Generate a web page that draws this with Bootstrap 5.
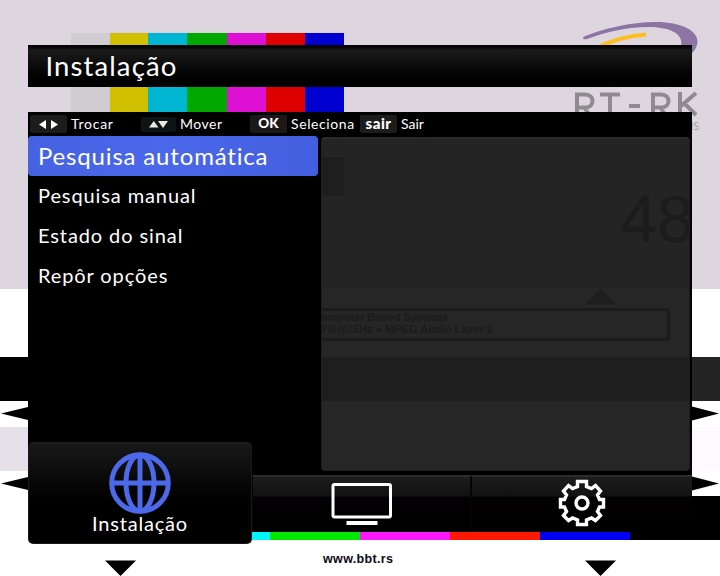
<!DOCTYPE html>
<html lang="pt">
<head>
<meta charset="utf-8">
<meta name="viewport" content="width=device-width, initial-scale=1">
<title>Instalação</title>
<link href="https://cdn.jsdelivr.net/npm/bootstrap@5.3.0/dist/css/bootstrap.min.css" rel="stylesheet">
<style>
body{margin:0;background:#fff;font-family:Lato,"Open Sans",sans-serif;overflow:hidden}
.tv-screen{width:720px;height:576px}
.test-card{inset:0;width:720px;height:576px}
.osd{width:664px;margin-left:28px;padding-top:45px;color:#fff}
.osd-title{height:42px;margin-bottom:25px;padding-left:17.5px;font-size:27.5px;line-height:42px;letter-spacing:1.1px;background:linear-gradient(#050505 0,#050505 2px,#191919 5px,#111 16px,#050505 27px,#000 36px)}
.osd-main{height:363px;background:#000}
.keys{height:24px;font-size:14px;line-height:24px}
.keycap{width:37px;height:18px;background:#1c1c1c;border-radius:2px;font-weight:900;font-size:14px;line-height:17px}
.key-item{gap:4px}
.menu-col{width:290px}
.menu-col .list-group-item{height:40px;padding:0 0 0 10px;border:0;border-radius:0;background:transparent;color:#fff;font-size:20px;line-height:39px;letter-spacing:.9px;white-space:nowrap}
.menu-col .list-group-item.active{background:linear-gradient(90deg,#4562e3,#4c68ea 45%,#435fe0);border-radius:4px;font-size:24px;line-height:40px;letter-spacing:.83px;margin:0}
.preview{width:369px;height:334px;margin:1px 0 0 3px;background:#242424;border:1px solid #1e1e1e;border-top:2px solid #2b2b2b;border-radius:4px;overflow:hidden}
.preview svg{display:block;margin:-2px 0 0 -1px}
.tabs{height:102px;margin-top:-33px}
.tab-now{width:224px;height:102px;background:linear-gradient(#171717 0,#111 18px,#060606 42px,#000 60px);border:1px solid #191919;border-top:2px solid #1d1d1d;border-radius:5px;padding-top:8px;font-size:20px;line-height:19px;letter-spacing:.8px}
.tab-off{height:57px;margin-top:33px;border-top:2px solid #2c2c2c;border-left:1px solid #050505;background:linear-gradient(#1c1c1c,#121212 19px,#030103 20px,#000)}
.tab-tv{width:219px;border-right:1px solid #050505}
.tab-gear{width:221px;background:linear-gradient(#1c1c1c,#121212 19px,#030002 20px,#000)}
</style>
<script src="https://cdn.jsdelivr.net/npm/bootstrap@5.3.0/dist/js/bootstrap.bundle.min.js"></script>
</head>
<body>
<div class="tv-screen position-relative overflow-hidden">
  <!-- Broadcast test card behind the menu -->
  <svg class="test-card position-absolute" viewBox="0 0 720 576" aria-hidden="true">
    <path fill="#ddd6de" d="M0 0h720v289H0z"/>
    <path fill="#d1ccd1" d="M71 33h39v80H71z"/><path fill="#d0c000" d="M110 33h38v80h-38z"/><path fill="#00b6d3" d="M148 33h39v80h-39z"/><path fill="#00a800" d="M187 33h40v80h-40z"/><path fill="#de10d3" d="M227 33h39v80h-39z"/><path fill="#de0000" d="M266 33h39v80h-39z"/><path fill="#0000d0" d="M305 33h39v80h-39z"/>
    <path fill="#d8c8ec" opacity=".45" d="M110 32h234v1H110z"/>
    <path fill="#8e74a5" d="M584 36.500C603 29 630 22 656 22C682 22 698 31 697.500 42C697 47 695 50 692 53L681 46C684 33 668 27 649 27C624 27 604 33 587 39C583 40 582 38 584 36.500Z"/>
    <path fill="none" stroke="#ffbe1c" stroke-width="4" d="M595 49C609 41 627 36 646 34.500"/>
    <g fill="none" stroke="#8f8a90" stroke-width="4"><path d="M577 116V94.500h8c10 0 10 13 0 13h-8M584 107l8 12M600 94.500h20M610 94v22M629 106H640M653 116V94.500h8c10 0 10 13 0 13h-8M660 107l8 12M680 92v24M696 93l-15 13M684 103l12 12"/></g>
    <text x="699" y="130" text-anchor="end" font-family="Open Sans, sans-serif" font-size="10" fill="#a09aa2">SYSTEMS</text>
    <path d="M0 357h28v44H0z"/><path fill="#242424" d="M692 357h28v44h-28z"/>
    <path fill="#e6e0e8" d="M0 427h28v44H0z"/><path fill="#fdf9fe" d="M692 427h28v44h-28z"/>
    <path d="M1 413.500l27-6.500v13zM1 483.500l27-6.500v13zM719 413.500l-27-7v14zM719 483.500l-27-7v14zM105 560.500h31L120.500 576zM585 560.500h31L600.500 576z"/>
    <path fill="#00f5ff" d="M252 530h18v10h-18z"/><path fill="#00e800" d="M270 530h90v10h-90z"/><path fill="#ff18ff" d="M360 530h90v10h-90z"/><path fill="#ff1800" d="M450 530h90v10h-90z"/><path fill="#0000f4" d="M540 530h90v10h-90z"/><path d="M630 496h90v44h-90z"/>
    <text x="323" y="563" textLength="70" font-family="Liberation Sans, Arial, sans-serif" font-weight="700" font-size="12.500" fill="#100a18">www.bbt.rs</text>
  </svg>

  <div class="osd position-relative">
    <header class="osd-title">Instalação</header>

    <main class="osd-main">
      <div class="keys d-flex">
        <div class="key-item d-flex align-items-center" style="width:113px;padding-left:2px">
          <span class="keycap d-flex align-items-center justify-content-center"><svg width="19" height="9" viewBox="0 0 19 9"><path fill="#fff" d="M7 0v9L0 4.500zM12 0v9l7-4.500z"/></svg></span><span style="letter-spacing:.75px">Trocar</span>
        </div>
        <div class="key-item d-flex align-items-center" style="width:109px">
          <span class="keycap d-flex align-items-center justify-content-center" style="width:35px;height:15px;background:#0d1416"><svg width="19" height="7" viewBox="0 0 19 7"><path fill="#e8e8e0" d="M0 6.500h9.500L4.800 0zM9 0h10l-5 7z"/></svg></span><span style="letter-spacing:.5px">Mover</span>
        </div>
        <div class="key-item d-flex align-items-center" style="width:110px">
          <span class="keycap text-center" style="background:#1c1719;font-size:13.5px">OK</span><span style="letter-spacing:.6px">Seleciona</span>
        </div>
        <div class="key-item d-flex align-items-center">
          <span class="keycap text-center" style="font-size:15px;line-height:16px;letter-spacing:.5px">sair</span><span>Sair</span>
        </div>
      </div>
      <div class="d-flex">
        <nav class="menu-col list-group list-group-flush">
          <a class="list-group-item active">Pesquisa automática</a>
          <a class="list-group-item">Pesquisa manual</a>
          <a class="list-group-item">Estado do sinal</a>
          <a class="list-group-item">Repôr opções</a>
        </nav>
        <section class="preview">
          <!-- Dimmed part of the test card seen through the preview pane -->
          <svg width="369" height="334" viewBox="321 137 369 334">
            <path fill="#262626" d="M321 289h369v182H321z"/>
            <path fill="#1e1e1e" d="M321 157h23v39h-23zM321 357h369v44H321zM585 304.500h31L600.500 289z"/>
            <path fill="none" stroke="#1c1c1c" stroke-width="3" d="M318 309.500h350.500v30H318"/>
            <g fill="#1b1b1b" font-family="Liberation Sans, Arial, sans-serif" font-weight="700" font-size="11">
              <text x="448" y="321" text-anchor="end" textLength="135">Computer Based Systems</text>
              <text x="493" y="333" text-anchor="end" textLength="178">576i@25Hz + MPEG Audio Layer 2</text>
            </g>
            <text x="620" y="242" textLength="74" font-family="Liberation Sans, Arial, sans-serif" font-size="67" fill="#1c1c1c">48</text>
            <path fill="none" stroke="#2b2b2b" d="M321 137.500h369"/>
          </svg>
        </section>
      </div>
    </main>

    <footer class="tabs d-flex">
      <div class="tab-now d-flex flex-column align-items-center">
        <svg width="62" height="62" viewBox="0 0 62 62" fill="none" stroke="#4b69e8" stroke-width="5"><circle cx="31" cy="31" r="28.300"/><ellipse cx="31" cy="31" rx="14" ry="28"/><path d="M31 3v56M3 31h56"/></svg>
        <span>Instalação</span>
      </div>
      <div class="tab-off tab-tv d-flex justify-content-center">
        <svg class="mt-1" width="62" height="46" viewBox="0 0 62 46"><rect x="2" y="3.500" width="57.500" height="32.500" rx="1.500" fill="none" stroke="#fff" stroke-width="3"/><path fill="#fff" d="M15.500 40h31v4h-31z"/></svg>
      </div>
      <div class="tab-off tab-gear d-flex justify-content-center">
        <svg width="48" height="52" viewBox="558 477 48 52" fill="none" stroke="#fff" stroke-width="3.400" stroke-linejoin="miter"><path d="M577.500 481.500H586.500V486.500L591.500 488.500L595.500 485.500L600.500 491L597.500 495L599.500 499.500L603.500 499.500V507L599.500 507L597.500 511.500L600.500 515.500L595.500 520.500L591.500 518L586.500 520V524.500H577.500V520L572.500 518L568.500 520.500L563.500 515.500L566.500 511.500L564.500 507H560.500V499.500H564.500L566.500 495L563.500 491L568.500 485.500L572.500 488.500L577.500 486.500Z"/><circle cx="582" cy="503" r="6"/></svg>
      </div>
    </footer>
  </div>
</div>
</body>
</html>
